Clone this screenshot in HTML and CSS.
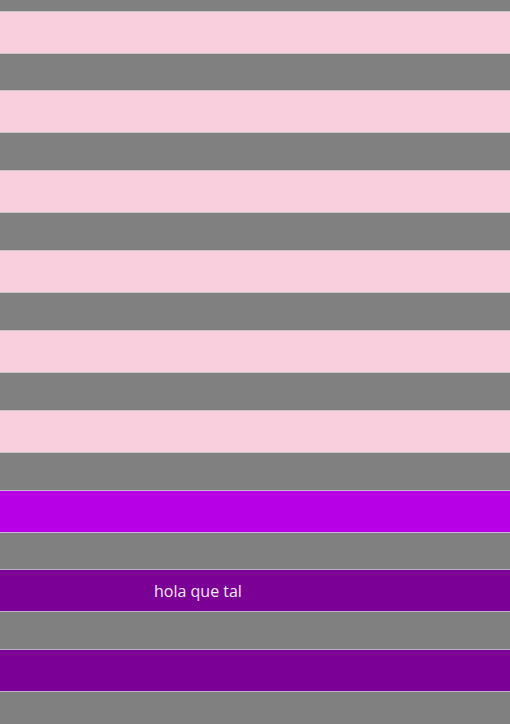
FILE: index.html
```html
<!DOCTYPE html>
<html lang="es">
<head>
<meta charset="utf-8">
<title>Franjas</title>
<link rel="stylesheet" href="styles.css">
</head>
<body>
<div class="list">
  <div class="band pink"></div>
  <div class="band pink"></div>
  <div class="band pink"></div>
  <div class="band pink"></div>
  <div class="band pink"></div>
  <div class="band pink"></div>
  <div class="band violet"></div>
  <div class="band plum"><span class="label">hola que tal</span></div>
  <div class="band plum"></div>
</div>
</body>
</html>
```
FILE: styles.css
```css
html, body {
  margin: 0;
  padding: 0;
  background: #808080;
  font-family: "Open Sans", "Noto Sans", sans-serif;
}

.list {
  display: flex;
  flex-direction: column;
  gap: 36.85px;
  padding-top: 10.5px;
}

.band {
  box-sizing: border-box;
  height: 43px;
  border-top: 1px solid #c6c6c6;
  border-bottom: 1px solid #c6c6c6;
  display: flex;
  align-items: center;
}

.pink {
  background: #f9cfdd;
}

.violet {
  background: #b800e6;
  border-color: #cbb0d6;
}

.plum {
  background: #7b0096;
  border-color: #c0aec8;
}

.label {
  padding-left: 154px;
  color: #f4eaf6;
  font-size: 16px;
}
```
